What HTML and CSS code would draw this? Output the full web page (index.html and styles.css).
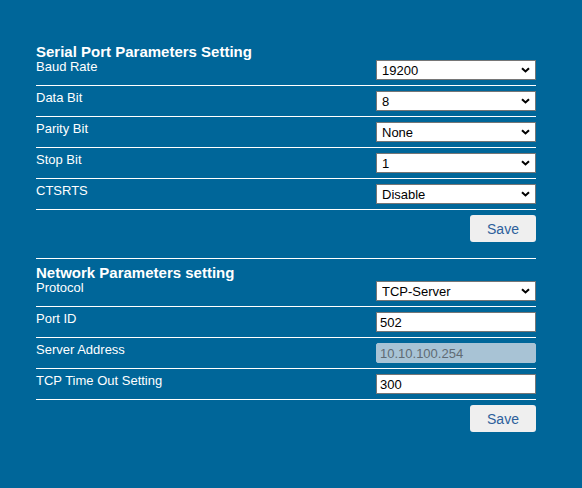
FILE: index.html
```html
<!DOCTYPE html>
<html>
<head>
<meta charset="utf-8">
<link rel="stylesheet" href="styles.css">
</head>
<body>
<div class="page">
  <section class="panel">
    <h2 class="title">Serial Port Parameters Setting</h2>
    <div class="row first">
      <span class="label">Baud Rate</span>
      <span class="control"><select class="field"><option>19200</option></select><svg class="chev" viewBox="0 0 9 6"><path d="M1 1.2 L4.5 4.5 L8 1.2" fill="none" stroke="#000" stroke-width="2"/></svg></span>
    </div>
    <div class="row">
      <span class="label">Data Bit</span>
      <span class="control"><select class="field"><option>8</option></select><svg class="chev" viewBox="0 0 9 6"><path d="M1 1.2 L4.5 4.5 L8 1.2" fill="none" stroke="#000" stroke-width="2"/></svg></span>
    </div>
    <div class="row">
      <span class="label">Parity Bit</span>
      <span class="control"><select class="field"><option>None</option></select><svg class="chev" viewBox="0 0 9 6"><path d="M1 1.2 L4.5 4.5 L8 1.2" fill="none" stroke="#000" stroke-width="2"/></svg></span>
    </div>
    <div class="row">
      <span class="label">Stop Bit</span>
      <span class="control"><select class="field"><option>1</option></select><svg class="chev" viewBox="0 0 9 6"><path d="M1 1.2 L4.5 4.5 L8 1.2" fill="none" stroke="#000" stroke-width="2"/></svg></span>
    </div>
    <div class="row">
      <span class="label">CTSRTS</span>
      <span class="control"><select class="field"><option>Disable</option></select><svg class="chev" viewBox="0 0 9 6"><path d="M1 1.2 L4.5 4.5 L8 1.2" fill="none" stroke="#000" stroke-width="2"/></svg></span>
    </div>
    <div class="actions divided"><button class="btn">Save</button></div>
  </section>
  <section class="panel second">
    <h2 class="title">Network Parameters setting</h2>
    <div class="row first">
      <span class="label">Protocol</span>
      <span class="control"><select class="field"><option>TCP-Server</option></select><svg class="chev" viewBox="0 0 9 6"><path d="M1 1.2 L4.5 4.5 L8 1.2" fill="none" stroke="#000" stroke-width="2"/></svg></span>
    </div>
    <div class="row">
      <span class="label">Port ID</span>
      <span class="control"><input class="field text" value="502"></span>
    </div>
    <div class="row">
      <span class="label">Server Address</span>
      <span class="control"><input class="field text disabled" value="10.10.100.254" disabled></span>
    </div>
    <div class="row">
      <span class="label">TCP Time Out Setting</span>
      <span class="control"><input class="field text" value="300"></span>
    </div>
    <div class="actions"><button class="btn">Save</button></div>
  </section>
</div>
</body>
</html>
```
FILE: styles.css
```css
html, body {
  margin: 0;
  height: 100%;
}
body {
  background: #006699;
  font-family: "Liberation Sans", Arial, sans-serif;
  color: #ffffff;
}
.page {
  padding: 44px 0 0 36px;
  width: 500px;
}
.title {
  margin: 0;
  font-size: 15px;
  font-weight: bold;
  line-height: 15px;
}
.second .title {
  margin-top: 6px;
}
.row {
  display: flex;
  justify-content: space-between;
  align-items: flex-start;
  height: 30px;
  border-bottom: 1px solid #ffffff;
  font-size: 13px;
}
.row.first {
  height: 26px;
}
.label {
  padding-top: 4px;
  line-height: 15px;
}
.row.first .label {
  padding-top: 0;
}
.control {
  position: relative;
  display: block;
  width: 160px;
  height: 20px;
  margin-top: 5px;
}
.row.first .control {
  margin-top: 1px;
}
.field {
  box-sizing: border-box;
  display: block;
  width: 160px;
  height: 20px;
  margin: 0;
  padding: 0 0 0 5px;
  border: 1px solid #767676;
  border-radius: 0;
  background: #ffffff;
  color: #000000;
  font: 13px "Liberation Sans", Arial, sans-serif;
  -webkit-appearance: none;
  appearance: none;
  outline: none;
}
.field.text {
  padding-left: 3px;
}
.field.disabled {
  background: #a8c3d5;
  border-color: #a8c3d5;
  border-radius: 2px;
  color: #5f6b74;
}
.chev {
  position: absolute;
  right: 6px;
  top: 7px;
  width: 9px;
  height: 6px;
  pointer-events: none;
}
.actions {
  display: flex;
  justify-content: flex-end;
  padding-top: 5px;
}
.actions.divided {
  padding-bottom: 16px;
  border-bottom: 1px solid #ffffff;
}
.btn {
  width: 66px;
  height: 27px;
  padding: 0;
  border: 0;
  border-radius: 3px;
  background: #efefef;
  color: #2d5f9c;
  font: 14px "Liberation Sans", Arial, sans-serif;
}
```
